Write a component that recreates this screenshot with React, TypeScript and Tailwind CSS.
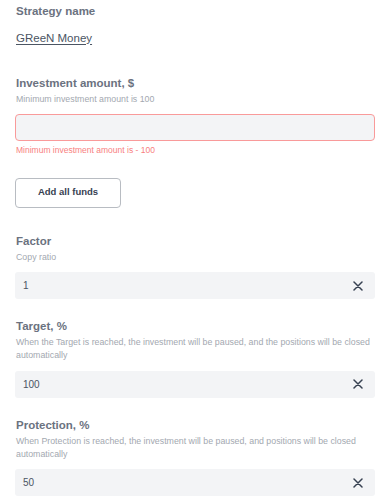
import React from "react";

const font = { fontFamily: '"Liberation Sans", Arial, sans-serif' };

function XIcon() {
  return (
    <svg width="10" height="10" viewBox="0 0 10 10" fill="none">
      <path d="M1 1L9 9M9 1L1 9" stroke="#374151" strokeWidth="1.5" strokeLinecap="round" />
    </svg>
  );
}

function Field({ label, desc, value, first }: { label: string; desc: React.ReactNode; value: string; first?: boolean }) {
  return (
    <div className={first ? "mt-[26px]" : "mt-5"}>
      <div className="pl-[1px] text-[11.5px] leading-[14px] font-bold text-[#6b7280]">{label}</div>
      <div className="mt-[3px] pl-[1px] text-[8.8px] leading-[13px] text-[#a3a8b0]">{desc}</div>
      <div className="mt-[8.5px] h-[27px] rounded-[3px] bg-[#f3f4f6] flex items-center justify-between pl-[8px] pr-[12px]">
        <span className="text-[10px] text-[#4b5563]">{value}</span>
        <XIcon />
      </div>
    </div>
  );
}

export default function App() {
  return (
    <div style={font} className="w-[388px] h-[501px] overflow-hidden bg-white pl-[15px] pr-[13px] pt-[3.5px]">
      <div className="pl-[1px] text-[11.5px] leading-[14px] font-bold text-[#6b7280]">Strategy name</div>
      <div className="pl-[1px] mt-[13px] text-[11.5px] leading-[14px] text-[#4b5563] underline underline-offset-2">GReeN Money</div>

      <div className="mt-[31px] pl-[1px] text-[11.5px] leading-[14px] font-bold text-[#6b7280]">Investment amount, $</div>
      <div className="mt-[3px] pl-[1px] text-[8.8px] leading-[13px] text-[#a3a8b0]">Minimum investment amount is 100</div>
      <div className="mt-[8px] h-[27px] rounded-[4px] bg-[#f3f4f6] border border-[#f99a9a]"></div>
      <div className="mt-[3.5px] pl-[1px] text-[8.5px] leading-[12px] text-[#f87f7f]">Minimum investment amount is - 100</div>
      <button className="mt-[21.5px] w-[106px] h-[30px] rounded-[4px] border border-[#b8bcc2] bg-white text-[9.5px] font-bold text-[#374151] flex items-center justify-center">
        Add all funds
      </button>

      <Field first label="Factor" desc="Copy ratio" value="1" />
      <Field
        label="Target, %"
        desc="When the Target is reached, the investment will be paused, and the positions will be closed automatically"
        value="100"
      />
      <Field
        label="Protection, %"
        desc="When Protection is reached, the investment will be paused, and positions will be closed automatically"
        value="50"
      />
    </div>
  );
}
